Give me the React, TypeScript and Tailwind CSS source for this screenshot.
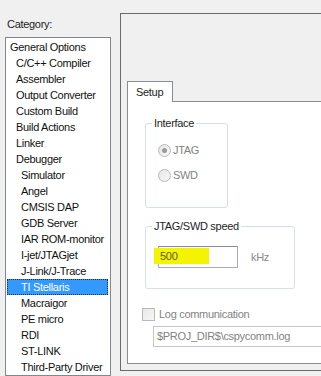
import React from "react";

const items: { label: string; level: number; selected?: boolean }[] = [
  { label: "General Options", level: 0 },
  { label: "C/C++ Compiler", level: 1 },
  { label: "Assembler", level: 1 },
  { label: "Output Converter", level: 1 },
  { label: "Custom Build", level: 1 },
  { label: "Build Actions", level: 1 },
  { label: "Linker", level: 1 },
  { label: "Debugger", level: 1 },
  { label: "Simulator", level: 2 },
  { label: "Angel", level: 2 },
  { label: "CMSIS DAP", level: 2 },
  { label: "GDB Server", level: 2 },
  { label: "IAR ROM-monitor", level: 2 },
  { label: "I-jet/JTAGjet", level: 2 },
  { label: "J-Link/J-Trace", level: 2 },
  { label: "TI Stellaris", level: 2, selected: true },
  { label: "Macraigor", level: 2 },
  { label: "PE micro", level: 2 },
  { label: "RDI", level: 2 },
  { label: "ST-LINK", level: 2 },
  { label: "Third-Party Driver", level: 2 },
];

const indent = ["pl-[2px]", "pl-[8px]", "pl-[13px]"];

function Radio({ checked, label }: { checked?: boolean; label: string }) {
  return (
    <div className="flex items-center h-[16px]">
      <div className="w-[13px] h-[13px] rounded-full border border-[#b9b9b9] bg-gradient-to-br from-[#e6e6e6] to-[#f8f8f8] flex items-center justify-center">
        {checked && <div className="w-[5px] h-[5px] rounded-full bg-[#9a9a9a]" />}
      </div>
      <span className="ml-[2px] text-[#838383]">{label}</span>
    </div>
  );
}

function GroupBox({
  title,
  className,
  children,
}: {
  title: string;
  className: string;
  children: React.ReactNode;
}) {
  return (
    <div className={`border border-[#d5dfe5] rounded-[3px] ${className}`}>
      <div className="-mt-[7px] ml-[6px] px-[2px] bg-white w-fit leading-[13px] text-[#1e1e1e]">
        {title}
      </div>
      {children}
    </div>
  );
}

export default function App() {
  return (
    <div className="w-[321px] h-[376px] overflow-hidden bg-[#f0f0f0] flex font-['Liberation_Sans',Arial,sans-serif] text-[11px] tracking-[-0.3px] text-black">
      {/* Category list */}
      <div className="w-[106px] ml-[5px] shrink-0 flex flex-col">
        <div className="mt-[16px] h-[16px] leading-[16px] pl-[2px] text-[#1e1e1e]">Category:</div>
        <div className="mt-[5px] border border-[#828790] bg-white h-[345px] pt-[1px]">
          {items.map((it) => (
            <div
              key={it.label}
              className={`h-[16px] leading-[14px] ml-[1px] mr-[2px] border whitespace-nowrap ${
                it.selected
                  ? "bg-[#3399ff] text-white border-dotted border-[#0d2a6e]"
                  : "border-transparent text-[#111]"
              } ${indent[it.level]}`}
            >
              {it.label}
            </div>
          ))}
        </div>
      </div>

      {/* Options panel */}
      <div className="ml-[9px] mt-[13px] w-[240px] h-[358px] shrink-0 border border-[#6b6b6b] pl-[6px] pt-[67px] flex flex-col">
        <div className="relative z-10 -mb-px w-[46px] h-[21px] border border-b-0 border-[#898c95] bg-white pl-[8px] leading-[20px] text-[#1e1e1e]">
          Setup
        </div>
        <div className="border border-[#898c95] bg-white h-[263px] w-[300px] pl-[14px] pt-[21px]">
          <GroupBox title="Interface" className="ml-[3px] w-[83px] h-[85px]">
            <div className="ml-[12px] mt-[12px]">
              <Radio checked label="JTAG" />
            </div>
            <div className="ml-[12px] mt-[9px]">
              <Radio label="SWD" />
            </div>
          </GroupBox>

          <GroupBox title="JTAG/SWD speed" className="ml-[3px] mt-[18px] w-[150px] h-[63px]">
            <div className="ml-[12px] mt-[13px] flex items-center">
              <div className="relative w-[80px] h-[22px] border border-[#abadb3] border-t-[#8a8d95] bg-white">
                <div className="absolute -left-[5px] top-[1px] w-[55px] h-[16px] bg-[#f4f400]" />
                <span className="relative pl-[1px] leading-[18px] text-[#5a5a3a]">500</span>
              </div>
              <span className="ml-[13px] text-[#8a8a8a]">kHz</span>
            </div>
          </GroupBox>

          <div className="mt-[19px] flex items-center h-[13px]">
            <div className="w-[13px] h-[13px] border border-[#b9b9b9] bg-gradient-to-br from-[#e8e8e8] to-[#f7f7f7]" />
            <span className="ml-[4px] text-[#838383]">Log communication</span>
          </div>
          <div className="ml-[11px] mt-[5px] w-[200px] h-[21px] border border-[#c5c5c5] bg-white pl-[3px] leading-[19px] text-[#838383] whitespace-nowrap">
            $PROJ_DIR$\cspycomm.log
          </div>
        </div>
      </div>
    </div>
  );
}
